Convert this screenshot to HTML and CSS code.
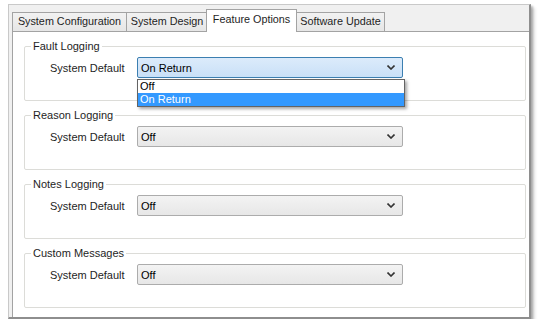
FILE: index.html
```html
<!DOCTYPE html>
<html>
<head>
<meta charset="utf-8">
<link rel="stylesheet" href="styles.css">
</head>
<body>
<div class="window">
  <div class="tabs">
    <div class="tab t1">System Configuration</div>
    <div class="tab t2">System Design</div>
    <div class="tab t3 active">Feature Options</div>
    <div class="tab t4">Software Update</div>
  </div>
  <div class="panel">
    <div class="group">
      <span class="legend">Fault Logging</span>
      <div class="row">
        <span class="label">System Default</span>
        <div class="combo focus">
          <span class="value">On Return</span>
          <svg class="chev" width="8" height="5" viewBox="0 0 8 5"><path d="M0.5 0.5 L4 4 L7.5 0.5" fill="none" stroke="#333" stroke-width="1.6"/></svg>
          <div class="droplist">
            <div class="opt">Off</div>
            <div class="opt sel">On Return</div>
          </div>
        </div>
      </div>
    </div>
    <div class="group">
      <span class="legend">Reason Logging</span>
      <div class="row">
        <span class="label">System Default</span>
        <div class="combo">
          <span class="value">Off</span>
          <svg class="chev" width="8" height="5" viewBox="0 0 8 5"><path d="M0.5 0.5 L4 4 L7.5 0.5" fill="none" stroke="#333" stroke-width="1.6"/></svg>
        </div>
      </div>
    </div>
    <div class="group">
      <span class="legend">Notes Logging</span>
      <div class="row">
        <span class="label">System Default</span>
        <div class="combo">
          <span class="value">Off</span>
          <svg class="chev" width="8" height="5" viewBox="0 0 8 5"><path d="M0.5 0.5 L4 4 L7.5 0.5" fill="none" stroke="#333" stroke-width="1.6"/></svg>
        </div>
      </div>
    </div>
    <div class="group">
      <span class="legend">Custom Messages</span>
      <div class="row">
        <span class="label">System Default</span>
        <div class="combo">
          <span class="value">Off</span>
          <svg class="chev" width="8" height="5" viewBox="0 0 8 5"><path d="M0.5 0.5 L4 4 L7.5 0.5" fill="none" stroke="#333" stroke-width="1.6"/></svg>
        </div>
      </div>
    </div>
  </div>
</div>
</body>
</html>
```
FILE: styles.css
```css
* { box-sizing: border-box; }
html, body { margin: 0; padding: 0; background: #fff; }
body {
  font-family: "Liberation Sans", Arial, sans-serif;
  font-size: 11px;
  color: #1e1e1e;
}
.window {
  margin: 4px 0 0 8px;
  width: 523px;
  height: 315px;
  background: #f0f0f0;
  border: 1px solid #c9c9c9;
  border-right: 2px solid #8e8e8e;
  border-bottom: 2px solid #8e8e8e;
  box-shadow: 2px 2px 2px rgba(0,0,0,0.25), 4px 4px 3px rgba(0,0,0,0.12);
  padding: 4px 0 0 3px;
  display: flex;
  flex-direction: column;
}
.tabs {
  display: flex;
  align-items: flex-end;
  height: 22px;
  position: relative;
  z-index: 2;
}
.tab {
  height: 19px;
  line-height: 17px;
  padding: 0;
  text-align: center;
  border: 1px solid #a3a3a3;
  border-bottom: none;
  background: linear-gradient(#f2f2f2, #e6e6e6);
  margin-right: -1px;
  white-space: nowrap;
  font-size: 10.8px;
}
.t1 { width: 115px; }
.t2 { width: 82px; }
.t3 { width: 91px; }
.t4 { width: 89px; }
.tab.active {
  height: 23px;
  line-height: 19px;
  background: #fff;
  margin: 0 -1px -1px -1px;
  position: relative;
  z-index: 3;
}
.panel {
  flex: 1;
  background: #fff;
  border: 1px solid #a3a3a3;
  border-right: none;
  border-bottom: none;
  padding: 14px 3px 0 11px;
  display: flex;
  flex-direction: column;
  gap: 14px;
}
.group {
  position: relative;
  height: 55px;
  border: 1px solid #dcdcd8;
  border-radius: 2px;
  padding: 10px 0 0 25px;
}
.legend {
  position: absolute;
  top: -8px;
  left: 6px;
  padding: 0 2px;
  background: #fff;
  line-height: 14px;
}
.row {
  display: flex;
  align-items: center;
}
.label {
  width: 87px;
}
.combo {
  position: relative;
  width: 266px;
  height: 21px;
  border: 1px solid #acacac;
  border-radius: 2px;
  background: linear-gradient(#f3f3f3, #e7e7e7);
  display: flex;
  align-items: center;
  padding: 0 0 0 3px;
}
.combo.focus {
  border-color: #3c7fb1;
  background: linear-gradient(#dcebfb, #c9e0f7);
}
.value { flex: 1; color: #000; }
.chev { margin-right: 7px; }
.droplist {
  position: absolute;
  left: -1px;
  top: 21px;
  width: 268px;
  border: 1px solid #646464;
  background: #fff;
  box-shadow: 2px 2px 3px rgba(0,0,0,0.35);
  z-index: 5;
}
.opt {
  height: 13px;
  line-height: 13px;
  padding-left: 2px;
  color: #000;
}
.opt.sel {
  background: #3399ff;
  color: #fff;
}
```
